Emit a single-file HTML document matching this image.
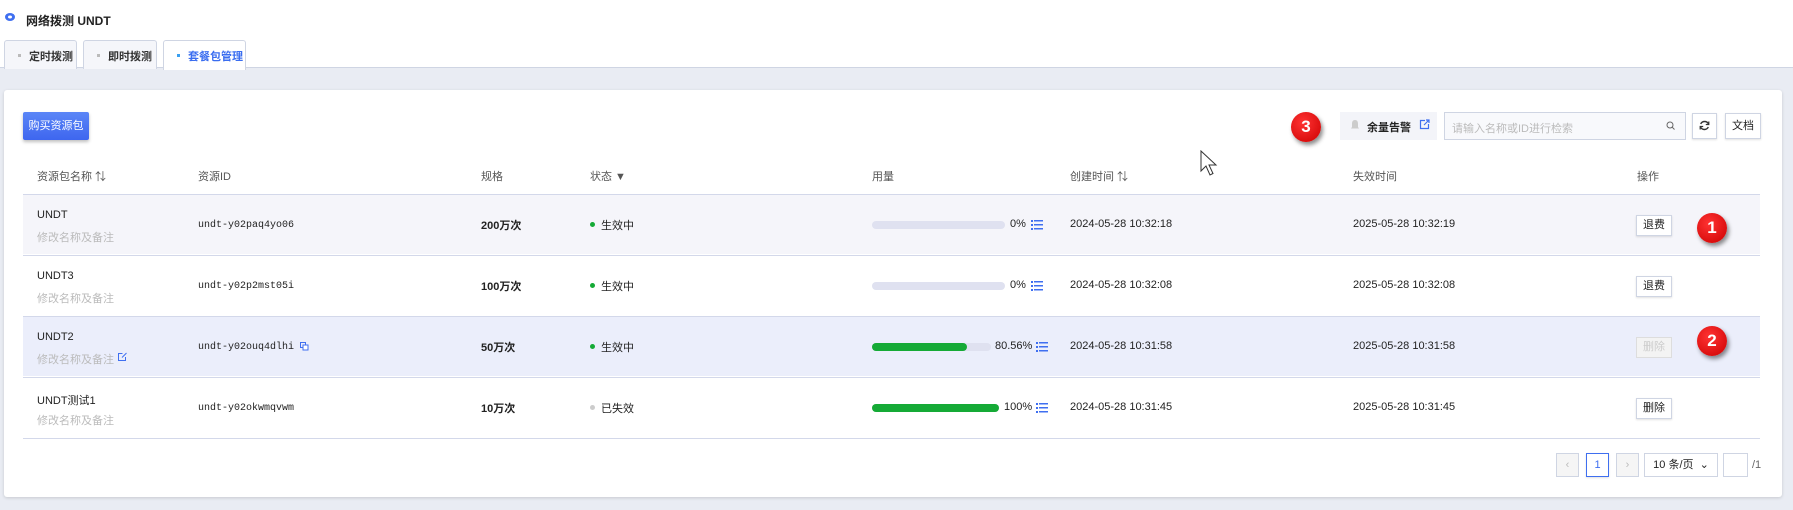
<!DOCTYPE html>
<html><head><meta charset="utf-8"><style>
*{box-sizing:border-box;margin:0;padding:0}
body{width:1793px;height:510px;background:#e9ecf3;font-family:"Liberation Sans","Noto Sans CJK SC",sans-serif;font-size:11px;color:#222;position:relative;overflow:hidden}
.top{position:absolute;left:0;top:0;width:1793px;height:68px;background:#fff;border-bottom:1px solid #cfd5e3}
.a{position:absolute;white-space:nowrap}
.tab{position:absolute;top:40px;height:29px;border:1px solid #cfd5e3;border-bottom:none;background:#f5f6fa;border-radius:3px 3px 0 0;font-size:11px;font-weight:bold;color:#333;padding-top:7px;padding-left:24px;white-space:nowrap}
.tab i{position:absolute;left:13px;top:13px;width:3px;height:3px;background:#bbb}
.card{position:absolute;left:4px;top:90px;width:1778px;height:407px;background:#fff;border-radius:3px;box-shadow:0 1px 3px rgba(0,0,0,.15)}
.btn{position:absolute;border:1px solid #cfd5e3;background:#fff;box-shadow:0 1px 2px rgba(0,0,0,.12);font-size:11px;text-align:center;white-space:nowrap}
.hd{color:#555}
.line{position:absolute;left:23px;width:1737px;height:1px;background:#d3d8ea}
.row{position:absolute;left:23px;width:1737px;height:60px}
.mono{font-family:"Liberation Mono",monospace;font-size:10px}
.sub{color:#bbb}
.dot{display:inline-block;width:5px;height:5px;border-radius:50%;margin-right:6px;vertical-align:2px}
.bar{position:absolute;left:872px;width:133px;height:8px;border-radius:4px;background:#dfe1f0}
.bar b{display:block;height:8px;border-radius:4px;background:#15aa36}
.badge{position:absolute;width:30px;height:30px;border-radius:50%;background:radial-gradient(circle at 40% 35%,#f33,#c00);color:#fff;font-weight:bold;font-size:17px;text-align:center;line-height:30px;box-shadow:2px 3px 4px rgba(0,0,0,.45)}
</style></head><body>
<div class="top"></div>
<svg class="a" style="left:4px;top:12px" width="12" height="10" viewBox="0 0 12 10"><ellipse cx="6" cy="5" rx="5" ry="4" fill="#3f6ff0"/><ellipse cx="6" cy="5" rx="2" ry="1.5" fill="#fff"/></svg>
<div class="a" style="left:26px;top:12px;font-size:12px;font-weight:bold">网络拨测 UNDT</div>
<div class="tab" style="left:4px;width:73px"><i></i>定时拨测</div>
<div class="tab" style="left:83px;width:74px"><i></i>即时拨测</div>
<div class="tab" style="left:163px;width:83px;background:#fff;height:30px;color:#3a6df0"><i style="background:#3aa0f0"></i>套餐包管理</div>
<div class="card"></div>
<div class="a" style="left:23px;top:112px;width:66px;height:28px;background:linear-gradient(#5b86f7,#3e66ef);border-radius:2px;color:#fff;text-align:center;line-height:28px;box-shadow:0 2px 3px rgba(0,0,0,.25)">购买资源包</div>
<div class="a" style="left:1340px;top:112px;width:97px;height:28px;background:#f3f4f9"></div>
<svg class="a" style="left:1350px;top:119px" width="10" height="12"><path d="M5 1C2.5 1 2 3 2 5v3L1 9.5h8L8 8V5c0-2-.5-4-3-4z" fill="#ccc"/></svg>
<div class="a" style="left:1367px;top:119px;font-weight:bold">余量告警</div>
<svg class="a" style="left:1419px;top:119px" width="11" height="11"><path d="M6 1.5H1.5v8h8V5M5 6l5-5M7 1h3v3" stroke="#3f6ff0" fill="none" stroke-width="1.2"/></svg>
<div class="a" style="left:1444px;top:112px;width:242px;height:28px;border:1px solid #cfd5e3;background:#f8f9fc;color:#bbb;padding:7px 7px">请输入名称或ID进行检索</div>
<svg class="a" style="left:1666px;top:121px" width="9" height="9"><circle cx="4" cy="4" r="3" stroke="#666" fill="none"/><path d="M6 6l2.5 2.5" stroke="#666"/></svg>
<div class="btn" style="left:1692px;top:113px;width:25px;height:26px"></div>
<svg class="a" style="left:1699px;top:120px" width="11" height="11"><path d="M9.5 4A4.3 4.3 0 0 0 1.7 4M1.5 7a4.3 4.3 0 0 0 7.8 0" stroke="#333" fill="none" stroke-width="1.4"/><path d="M9.8 1.5v3h-3M1.2 9.5v-3h3" stroke="#333" fill="none" stroke-width="1.2"/></svg>
<div class="btn" style="left:1725px;top:113px;width:36px;height:26px;line-height:24px">文档</div>
<div class="badge" style="left:1291px;top:112px">3</div>
<svg class="a" style="left:1200px;top:150px" width="22" height="28"><path d="M1 1v20l5-5 4 9 3-1.5-4-8.5h7z" fill="#fff" stroke="#333" stroke-width="1"/></svg>

<div class="a hd" style="left:37px;top:168px">资源包名称 ⇅</div>
<div class="a hd" style="left:198px;top:168px">资源ID</div>
<div class="a hd" style="left:481px;top:168px">规格</div>
<div class="a hd" style="left:590px;top:168px">状态 ▼</div>
<div class="a hd" style="left:872px;top:168px">用量</div>
<div class="a hd" style="left:1070px;top:168px">创建时间 ⇅</div>
<div class="a hd" style="left:1353px;top:168px">失效时间</div>
<div class="a hd" style="left:1637px;top:168px">操作</div>

<div class="row" style="top:194px;background:#f5f5fa"></div>
<div class="row" style="top:316px;background:#ebeefb"></div>
<div class="line" style="top:194px"></div><div class="line" style="top:255px"></div><div class="line" style="top:316px"></div><div class="line" style="top:377px"></div><div class="line" style="top:438px"></div>

<div class="a" style="left:37px;top:209px">UNDT</div><div class="a sub" style="left:37px;top:229px">修改名称及备注</div>
<div class="a mono" style="left:198px;top:220px">undt-y02paq4yo06</div>
<div class="a" style="left:481px;top:217px;font-weight:bold">200万次</div>
<div class="a" style="left:590px;top:217px"><span class="dot" style="background:#15aa36"></span>生效中</div>
<div class="bar" style="top:221px"></div><div class="a" style="left:1010px;top:218px">0%</div>
<div class="a" style="left:1070px;top:218px">2024-05-28 10:32:18</div><div class="a" style="left:1353px;top:218px">2025-05-28 10:32:19</div>
<div class="btn" style="left:1636px;top:215px;width:36px;height:21px;line-height:19px">退费</div>

<div class="a" style="left:37px;top:270px">UNDT3</div><div class="a sub" style="left:37px;top:290px">修改名称及备注</div>
<div class="a mono" style="left:198px;top:281px">undt-y02p2mst05i</div>
<div class="a" style="left:481px;top:278px;font-weight:bold">100万次</div>
<div class="a" style="left:590px;top:278px"><span class="dot" style="background:#15aa36"></span>生效中</div>
<div class="bar" style="top:282px"></div><div class="a" style="left:1010px;top:279px">0%</div>
<div class="a" style="left:1070px;top:279px">2024-05-28 10:32:08</div><div class="a" style="left:1353px;top:279px">2025-05-28 10:32:08</div>
<div class="btn" style="left:1636px;top:276px;width:36px;height:21px;line-height:19px">退费</div>

<div class="a" style="left:37px;top:331px">UNDT2</div><div class="a sub" style="left:37px;top:351px">修改名称及备注</div>
<svg class="a" style="left:117px;top:352px" width="10" height="10"><path d="M5.5 1.5H1.5v7h7V5M5 5.5l4.5-4.5" stroke="#3f6ff0" fill="none"/></svg>
<div class="a mono" style="left:198px;top:342px">undt-y02ouq4dlhi</div>
<svg class="a" style="left:300px;top:342px" width="9" height="9"><rect x="0.5" y="0.5" width="5" height="5" fill="none" stroke="#3f6ff0"/><rect x="3" y="3" width="5" height="5" fill="#fff" stroke="#3f6ff0"/></svg>
<div class="a" style="left:481px;top:339px;font-weight:bold">50万次</div>
<div class="a" style="left:590px;top:339px"><span class="dot" style="background:#15aa36"></span>生效中</div>
<div class="bar" style="top:343px;width:119px"><b style="width:95px"></b></div><div class="a" style="left:995px;top:340px">80.56%</div>
<div class="a" style="left:1070px;top:340px">2024-05-28 10:31:58</div><div class="a" style="left:1353px;top:340px">2025-05-28 10:31:58</div>
<div class="btn" style="left:1636px;top:337px;width:36px;height:21px;line-height:19px;color:#ccc;background:#f3f3f3;box-shadow:none;border-color:#ddd">删除</div>

<div class="a" style="left:37px;top:392px">UNDT测试1</div><div class="a sub" style="left:37px;top:412px">修改名称及备注</div>
<div class="a mono" style="left:198px;top:403px">undt-y02okwmqvwm</div>
<div class="a" style="left:481px;top:400px;font-weight:bold">10万次</div>
<div class="a" style="left:590px;top:400px"><span class="dot" style="background:#ccc"></span>已失效</div>
<div class="bar" style="top:404px;width:127px"><b style="width:127px"></b></div><div class="a" style="left:1004px;top:401px">100%</div>
<div class="a" style="left:1070px;top:401px">2024-05-28 10:31:45</div><div class="a" style="left:1353px;top:401px">2025-05-28 10:31:45</div>
<div class="btn" style="left:1636px;top:398px;width:36px;height:21px;line-height:19px">删除</div>

<svg class="a" style="left:1031px;top:220px" width="12" height="10"><g fill="#3f6ff0"><rect x="0" y="0" width="2" height="2"/><rect x="3" y="0" width="9" height="1.5"/><rect x="0" y="4" width="2" height="2"/><rect x="3" y="4" width="9" height="1.5"/><rect x="0" y="8" width="2" height="2"/><rect x="3" y="8" width="9" height="1.5"/></g></svg>
<svg class="a" style="left:1031px;top:281px" width="12" height="10"><g fill="#3f6ff0"><rect x="0" y="0" width="2" height="2"/><rect x="3" y="0" width="9" height="1.5"/><rect x="0" y="4" width="2" height="2"/><rect x="3" y="4" width="9" height="1.5"/><rect x="0" y="8" width="2" height="2"/><rect x="3" y="8" width="9" height="1.5"/></g></svg>
<svg class="a" style="left:1036px;top:342px" width="12" height="10"><g fill="#3f6ff0"><rect x="0" y="0" width="2" height="2"/><rect x="3" y="0" width="9" height="1.5"/><rect x="0" y="4" width="2" height="2"/><rect x="3" y="4" width="9" height="1.5"/><rect x="0" y="8" width="2" height="2"/><rect x="3" y="8" width="9" height="1.5"/></g></svg>
<svg class="a" style="left:1036px;top:403px" width="12" height="10"><g fill="#3f6ff0"><rect x="0" y="0" width="2" height="2"/><rect x="3" y="0" width="9" height="1.5"/><rect x="0" y="4" width="2" height="2"/><rect x="3" y="4" width="9" height="1.5"/><rect x="0" y="8" width="2" height="2"/><rect x="3" y="8" width="9" height="1.5"/></g></svg>

<div class="badge" style="left:1697px;top:213px">1</div>
<div class="badge" style="left:1697px;top:326px">2</div>

<div class="btn" style="left:1556px;top:453px;width:23px;height:24px;background:#f5f5f5;color:#bbb;line-height:22px;box-shadow:none">‹</div>
<div class="btn" style="left:1586px;top:453px;width:23px;height:24px;border-color:#3f6ff0;color:#3f6ff0;line-height:22px">1</div>
<div class="btn" style="left:1616px;top:453px;width:23px;height:24px;background:#f5f5f5;color:#bbb;line-height:22px;box-shadow:none">›</div>
<div class="btn" style="left:1644px;top:453px;width:74px;height:24px;line-height:22px;box-shadow:none">10 条/页 &nbsp;⌄</div>
<div class="btn" style="left:1723px;top:453px;width:25px;height:24px;box-shadow:none"></div>
<div class="a" style="left:1752px;top:459px;color:#666;font-size:11px">/1</div>
</body></html>
